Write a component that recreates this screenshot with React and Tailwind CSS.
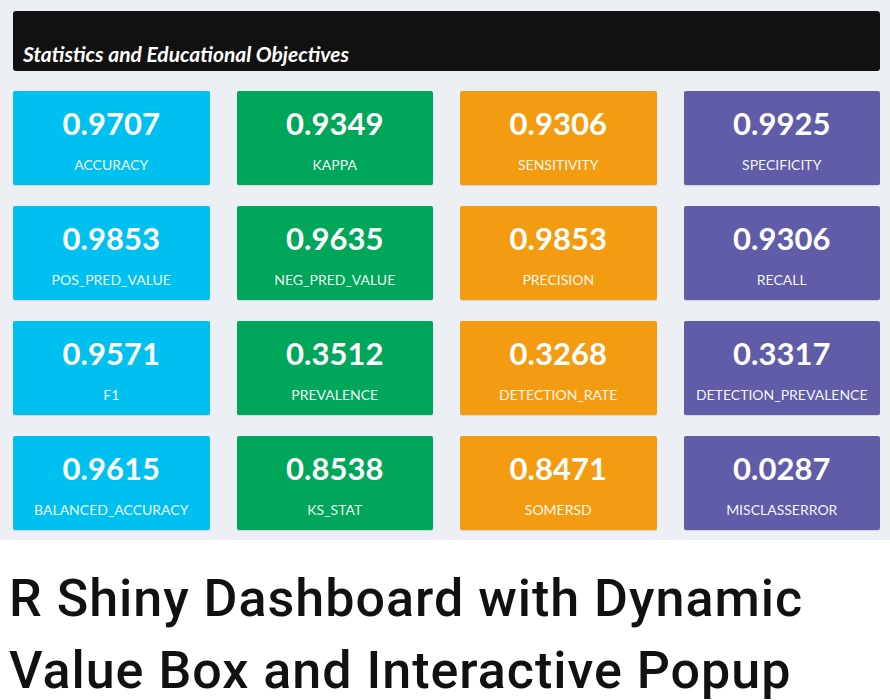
const stats = [
  ["0.9707", "ACCURACY", "bg-[#00c0ef]"],
  ["0.9349", "KAPPA", "bg-[#00a65a]"],
  ["0.9306", "SENSITIVITY", "bg-[#f39c12]"],
  ["0.9925", "SPECIFICITY", "bg-[#605ca8]"],
  ["0.9853", "POS_PRED_VALUE", "bg-[#00c0ef]"],
  ["0.9635", "NEG_PRED_VALUE", "bg-[#00a65a]"],
  ["0.9853", "PRECISION", "bg-[#f39c12]"],
  ["0.9306", "RECALL", "bg-[#605ca8]"],
  ["0.9571", "F1", "bg-[#00c0ef]"],
  ["0.3512", "PREVALENCE", "bg-[#00a65a]"],
  ["0.3268", "DETECTION_RATE", "bg-[#f39c12]"],
  ["0.3317", "DETECTION_PREVALENCE", "bg-[#605ca8]"],
  ["0.9615", "BALANCED_ACCURACY", "bg-[#00c0ef]"],
  ["0.8538", "KS_STAT", "bg-[#00a65a]"],
  ["0.8471", "SOMERSD", "bg-[#f39c12]"],
  ["0.0287", "MISCLASSERROR", "bg-[#605ca8]"],
];

export default function App() {
  return (
    <div className="w-[890px] h-[700px] bg-white overflow-hidden font-['Lato',sans-serif]">
      {/* dashboard body */}
      <div className="bg-[#ecf0f5] pt-[11px] pb-[10px] pl-[13px] pr-[10px]">
        <div className="h-[60px] bg-[#111111] rounded-[3px] flex items-end pl-[10px] pb-[7px]">
          <h2 className="text-white italic font-bold text-[21px] leading-none">
            Statistics and Educational Objectives
          </h2>
        </div>

        <div className="grid grid-cols-4 gap-x-[27px] gap-y-[21px] mt-[20px]">
          {stats.map(([value, label, bg]) => (
            <ValueBox key={label} value={value} label={label} bg={bg} />
          ))}
        </div>
      </div>

      {/* caption */}
      <p className="mt-[23px] pl-[9px] font-['Roboto',sans-serif] font-medium text-[52px] leading-[72px] tracking-[1px] text-[#111]">
        R Shiny Dashboard with Dynamic
        <br />
        Value Box and Interactive Popup
      </p>
    </div>
  );
}

const ValueBox = ({ value, label, bg }) => (
  <div className={`h-[94px] rounded-[2px] shadow-[0_1px_1px_rgba(0,0,0,0.12)] flex flex-col items-center text-white ${bg}`}>
    <h3 className="mt-[16px] font-bold text-[31px] leading-[32px]">{value}</h3>
    <p className="mt-[19px] text-[14px] leading-none text-white/95">{label}</p>
  </div>
);
